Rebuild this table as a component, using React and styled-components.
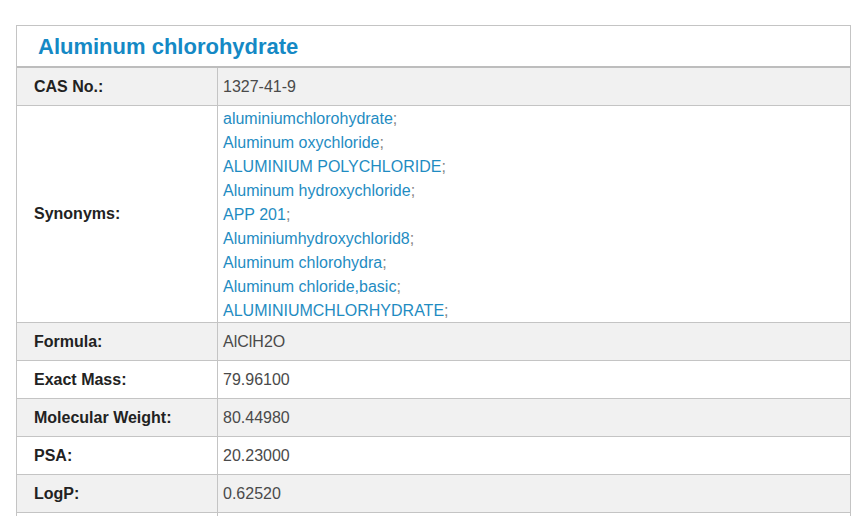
import React from "react";
import styled, { createGlobalStyle } from "styled-components";

const GlobalStyle = createGlobalStyle`
  html, body {
    margin: 0;
    padding: 0;
    background: #fff;
    font-family: "Liberation Sans", Arial, sans-serif;
  }
`;

const Page = styled.div`
  padding: 25px 10px 0 16px;
`;

const Card = styled.div`
  width: 835px;
  box-sizing: border-box;
  border: 1px solid #c4c4c4;
  border-bottom: none;
`;

const Title = styled.h1`
  margin: 0;
  height: 40px;
  padding: 0 0 0 21px;
  font-size: 22px;
  line-height: 41px;
  font-weight: bold;
  color: #1589c5;
  border-bottom: 2px solid #bdbdbd;
`;

const Row = styled.div`
  display: grid;
  grid-template-columns: 201px 1fr;
  border-bottom: 1px solid #c4c4c4;
  background: ${(p) => (p.$shade ? "#f1f1f1" : "#fff")};
  font-size: 16px;
`;

const Label = styled.div`
  display: flex;
  align-items: center;
  padding-left: 17px;
  min-height: 37px;
  font-weight: bold;
  color: #222;
  border-right: 1px solid #c4c4c4;
`;

const Value = styled.div`
  display: flex;
  align-items: center;
  padding-left: 5px;
  min-height: 37px;
  color: #4a4a4a;
`;

const SynList = styled.div`
  padding: 1px 0 0 5px;
  margin-bottom: -1px;
  line-height: 24px;
`;

const Syn = styled.div`
  color: #1f8cc2;
  span {
    color: #888;
  }
`;

const synonyms = [
  "aluminiumchlorohydrate",
  "Aluminum oxychloride",
  "ALUMINIUM POLYCHLORIDE",
  "Aluminum hydroxychloride",
  "APP 201",
  "Aluminiumhydroxychlorid8",
  "Aluminum chlorohydra",
  "Aluminum chloride,basic",
  "ALUMINIUMCHLORHYDRATE",
];

const rows = [
  ["Formula:", "AlClH2O"],
  ["Exact Mass:", "79.96100"],
  ["Molecular Weight:", "80.44980"],
  ["PSA:", "20.23000"],
  ["LogP:", "0.62520"],
  ["", ""],
];

export default function App() {
  return (
    <Page>
      <GlobalStyle />
      <Card>
        <Title>Aluminum chlorohydrate</Title>
        <Row $shade>
          <Label>CAS No.:</Label>
          <Value>1327-41-9</Value>
        </Row>
        <Row>
          <Label>Synonyms:</Label>
          <SynList>
            {synonyms.map((s) => (
              <Syn key={s}>
                {s}
                <span>;</span>
              </Syn>
            ))}
          </SynList>
        </Row>
        {rows.map(([label, value], i) => (
          <Row key={i} $shade={i % 2 === 0}>
            <Label>{label}</Label>
            <Value>{value}</Value>
          </Row>
        ))}
      </Card>
    </Page>
  );
}
